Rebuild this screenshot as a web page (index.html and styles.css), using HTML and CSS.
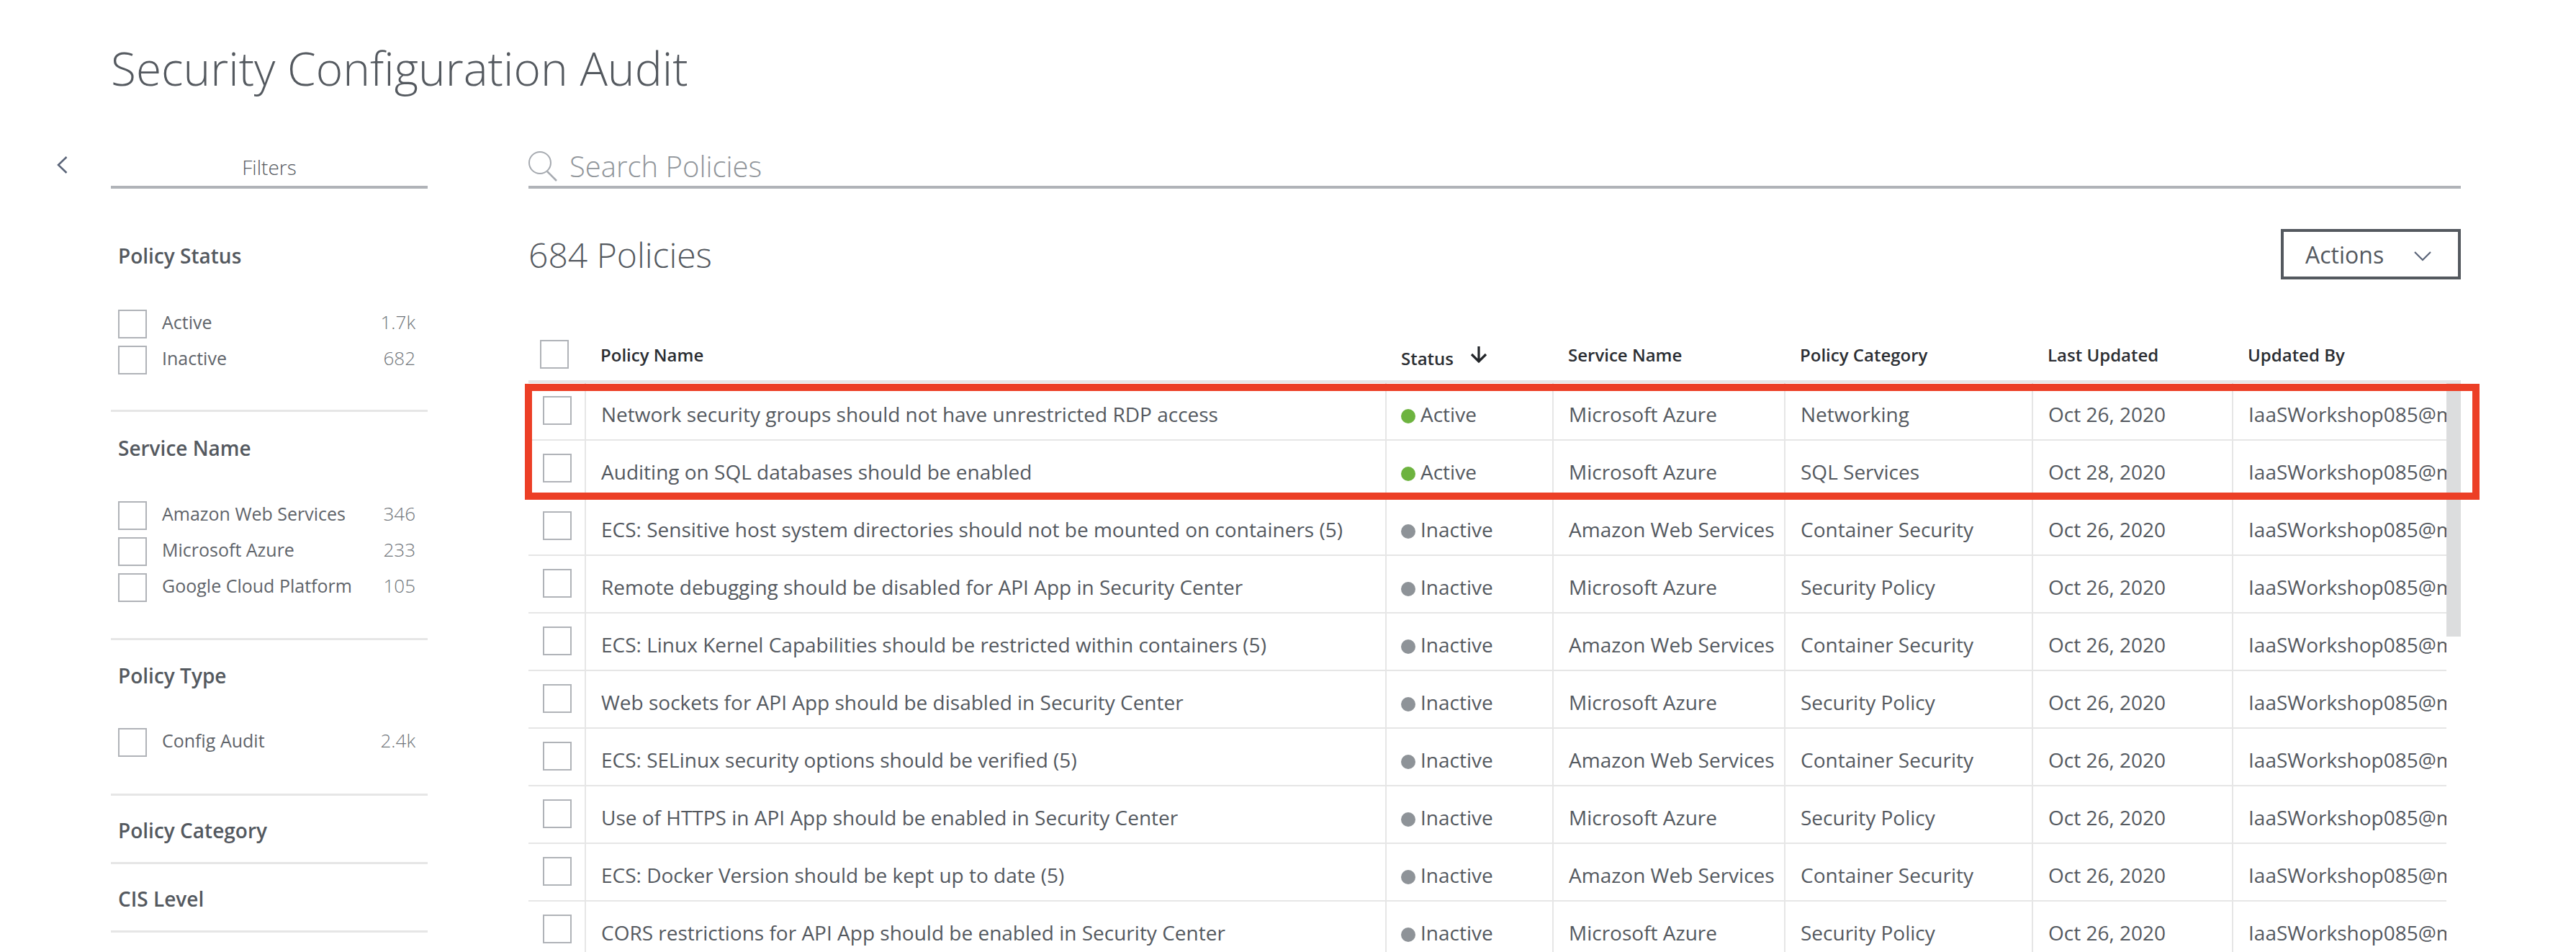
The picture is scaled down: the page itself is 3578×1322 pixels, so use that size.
FILE: index.html
```html
<!DOCTYPE html>
<html lang="en">
<head>
<meta charset="utf-8">
<title>Security Configuration Audit</title>
<link rel="stylesheet" href="styles.css">
</head>
<body>
<div class="page">
  <h1 class="title">Security Configuration Audit</h1>
  <div class="content">
    <div class="collapse">
      <svg class="collapse-icon" viewBox="0 0 15 24" width="15" height="24"><path d="M13.500 1 2 12l11.500 11" fill="none" stroke="#5a6478" stroke-width="2.500"/></svg>
    </div>
    <aside class="sidebar">
      <div class="filters-tab">Filters</div>
      <section class="group group-status">
        <h2 class="group-title">Policy Status</h2>
        <ul class="options">
          <li class="option"><span class="box"></span><span class="opt-label">Active</span><span class="opt-count">1.7k</span></li>
          <li class="option"><span class="box"></span><span class="opt-label">Inactive</span><span class="opt-count">682</span></li>
        </ul>
      </section>
      <section class="group group-service">
        <h2 class="group-title">Service Name</h2>
        <ul class="options">
          <li class="option"><span class="box"></span><span class="opt-label">Amazon Web Services</span><span class="opt-count">346</span></li>
          <li class="option"><span class="box"></span><span class="opt-label">Microsoft Azure</span><span class="opt-count">233</span></li>
          <li class="option"><span class="box"></span><span class="opt-label">Google Cloud Platform</span><span class="opt-count">105</span></li>
        </ul>
      </section>
      <section class="group group-type">
        <h2 class="group-title">Policy Type</h2>
        <ul class="options">
          <li class="option"><span class="box"></span><span class="opt-label">Config Audit</span><span class="opt-count">2.4k</span></li>
        </ul>
      </section>
      <section class="group group-closed"><h2 class="group-title">Policy Category</h2></section>
      <section class="group group-closed"><h2 class="group-title">CIS Level</h2></section>
    </aside>
    <main class="main">
      <div class="search">
        <svg class="search-icon" viewBox="0 0 42 42" width="42" height="42"><circle cx="16" cy="16" r="15" fill="none" stroke="#a6aab0" stroke-width="2"/><path d="m26 28 13 13" fill="none" stroke="#a6aab0" stroke-width="2.500"/></svg>
        <span class="search-text">Search Policies</span>
      </div>
      <div class="summary">
        <div class="count">684 Policies</div>
        <div class="actions"><span>Actions</span><svg class="actions-icon" viewBox="0 0 24 14" width="24" height="14"><path d="M1 1l11 11L23 1" fill="none" stroke="#5a6478" stroke-width="2.200"/></svg></div>
      </div>
      <div class="table">
        <div class="row head">
          <div class="cell-check"><span class="box"></span></div>
          <div class="hcell">Policy Name</div>
          <div class="hcell hcell-status">Status<svg class="sort-icon" viewBox="0 0 24 24" width="24" height="24"><path d="M12 1v21M2 12l10 10 10-10" fill="none" stroke="#23262a" stroke-width="3.200"/></svg></div>
          <div class="hcell">Service Name</div>
          <div class="hcell">Policy Category</div>
          <div class="hcell">Last Updated</div>
          <div class="hcell">Updated By</div>
        </div>
        <div class="body">
          <div class="rows">
            <div class="row"><div class="cell-check"><span class="box"></span></div><div class="cell">Network security groups should not have unrestricted RDP access</div><div class="cell cell-status"><i class="dot on"></i>Active</div><div class="cell">Microsoft Azure</div><div class="cell">Networking</div><div class="cell">Oct 26, 2020</div><div class="cell">IaaSWorkshop085@msn.com</div></div>
            <div class="row"><div class="cell-check"><span class="box"></span></div><div class="cell">Auditing on SQL databases should be enabled</div><div class="cell cell-status"><i class="dot on"></i>Active</div><div class="cell">Microsoft Azure</div><div class="cell">SQL Services</div><div class="cell">Oct 28, 2020</div><div class="cell">IaaSWorkshop085@msn.com</div></div>
            <div class="row"><div class="cell-check"><span class="box"></span></div><div class="cell">ECS: Sensitive host system directories should not be mounted on containers (5)</div><div class="cell cell-status"><i class="dot off"></i>Inactive</div><div class="cell">Amazon Web Services</div><div class="cell">Container Security</div><div class="cell">Oct 26, 2020</div><div class="cell">IaaSWorkshop085@msn.com</div></div>
            <div class="row"><div class="cell-check"><span class="box"></span></div><div class="cell">Remote debugging should be disabled for API App in Security Center</div><div class="cell cell-status"><i class="dot off"></i>Inactive</div><div class="cell">Microsoft Azure</div><div class="cell">Security Policy</div><div class="cell">Oct 26, 2020</div><div class="cell">IaaSWorkshop085@msn.com</div></div>
            <div class="row"><div class="cell-check"><span class="box"></span></div><div class="cell">ECS: Linux Kernel Capabilities should be restricted within containers (5)</div><div class="cell cell-status"><i class="dot off"></i>Inactive</div><div class="cell">Amazon Web Services</div><div class="cell">Container Security</div><div class="cell">Oct 26, 2020</div><div class="cell">IaaSWorkshop085@msn.com</div></div>
            <div class="row"><div class="cell-check"><span class="box"></span></div><div class="cell">Web sockets for API App should be disabled in Security Center</div><div class="cell cell-status"><i class="dot off"></i>Inactive</div><div class="cell">Microsoft Azure</div><div class="cell">Security Policy</div><div class="cell">Oct 26, 2020</div><div class="cell">IaaSWorkshop085@msn.com</div></div>
            <div class="row"><div class="cell-check"><span class="box"></span></div><div class="cell">ECS: SELinux security options should be verified (5)</div><div class="cell cell-status"><i class="dot off"></i>Inactive</div><div class="cell">Amazon Web Services</div><div class="cell">Container Security</div><div class="cell">Oct 26, 2020</div><div class="cell">IaaSWorkshop085@msn.com</div></div>
            <div class="row"><div class="cell-check"><span class="box"></span></div><div class="cell">Use of HTTPS in API App should be enabled in Security Center</div><div class="cell cell-status"><i class="dot off"></i>Inactive</div><div class="cell">Microsoft Azure</div><div class="cell">Security Policy</div><div class="cell">Oct 26, 2020</div><div class="cell">IaaSWorkshop085@msn.com</div></div>
            <div class="row"><div class="cell-check"><span class="box"></span></div><div class="cell">ECS: Docker Version should be kept up to date (5)</div><div class="cell cell-status"><i class="dot off"></i>Inactive</div><div class="cell">Amazon Web Services</div><div class="cell">Container Security</div><div class="cell">Oct 26, 2020</div><div class="cell">IaaSWorkshop085@msn.com</div></div>
            <div class="row"><div class="cell-check"><span class="box"></span></div><div class="cell">CORS restrictions for API App should be enabled in Security Center</div><div class="cell cell-status"><i class="dot off"></i>Inactive</div><div class="cell">Microsoft Azure</div><div class="cell">Security Policy</div><div class="cell">Oct 26, 2020</div><div class="cell">IaaSWorkshop085@msn.com</div></div>
          </div>
          <div class="scrollbar"><div class="thumb"></div></div>
          <div class="highlight"></div>
        </div>
      </div>
    </main>
  </div>
</div>
</body>
</html>
```
FILE: styles.css
```css
* { box-sizing: border-box; }
html, body { margin: 0; padding: 0; background: #fff; }
body { font-family: "Open Sans", "Liberation Sans", sans-serif; color: #54595f; overflow: hidden; height: 1322px; }
.page { height: 1322px; overflow: hidden; }
.title { margin: 0; padding-left: 154px; height: 200px; padding-top: 50px; font-size: 64px; line-height: 90px; font-weight: 300; color: #54595f; }
.content { display: flex; align-items: flex-start; }
.collapse { width: 154px; padding: 17px 0 0 79px; }
.collapse-icon { display: block; }
.sidebar { width: 440px; margin-right: 140px; flex: none; }
.filters-tab { height: 62px; border-bottom: 4px solid #b0b3b8; text-align: center; font-size: 28px; line-height: 64px; font-weight: 300; color: #54595f; }
.group { border-bottom: 3px solid #e6e6e6; padding: 0 17px 0 10px; }
.group-title { margin: 0; font-size: 28px; font-weight: 600; line-height: 40px; color: #54595f; }
.group-status { height: 310px; padding-top: 73px; }
.group-service { height: 317px; padding-top: 30px; }
.group-type { height: 216px; padding-top: 29px; }
.group-closed { height: 95px; padding-top: 28px; }
.options { list-style: none; margin: 55px 0 0; padding: 0; }
.group-service .options { margin-top: 54px; }
.group-type .options { margin-top: 53px; }
.option { display: flex; height: 50px; }
.box { display: block; flex: none; width: 40px; height: 40px; border: 2px solid #b0b3b8; background: #fff; }
.opt-label { margin-left: 21px; font-size: 25px; line-height: 34px; font-weight: 400; color: #5f646a; flex: 1; white-space: nowrap; }
.opt-count { font-size: 26px; line-height: 34px; font-weight: 300; color: #70757a; }
.main { width: 2684px; flex: none; }
.search { height: 62px; border-bottom: 4px solid #b0b3b8; display: flex; align-items: flex-start; }
.search-icon { display: block; margin-top: 10px; flex: none; }
.search-text { margin-left: 15px; font-size: 40px; line-height: 62px; font-weight: 300; color: #90959a; }
.summary { height: 210px; padding-top: 56px; display: flex; justify-content: space-between; align-items: flex-start; }
.count { font-size: 48px; line-height: 72px; font-weight: 300; color: #54595f; }
.actions { width: 250px; height: 70px; border: 4px solid #54595f; display: flex; align-items: center; padding-left: 30px; font-size: 32px; font-weight: 500; color: #54595f; }
.actions-icon { margin-left: 42px; margin-top: 6px; }
.row { display: grid; grid-template-columns: 78px 1112px 232px 322px 344px 278px 298px; height: 80px; border-bottom: 2px solid #e6e6e6; }
.row.head { height: 60px; border-bottom: 4px solid #e6e6e6; width: 2684px; grid-template-columns: 78px 1112px 232px 322px 344px 278px 318px; }
.head .cell-check { padding: 0 0 0 16px; }
.cell-check { padding: 18px 0 0 20px; }
.hcell { padding-left: 22px; padding-top: 2px; font-size: 24px; line-height: 38px; font-weight: 600; color: #2b2e33; white-space: nowrap; }
.hcell-status { display: flex; align-items: flex-start; padding-top: 7px; }
.sort-icon { margin-left: 23px; margin-top: 1px; flex: none; }
.cell { padding: 23px 0 0 21px; border-left: 2px solid #e6e6e6; font-size: 28px; line-height: 40px; color: #54595f; white-space: nowrap; overflow: hidden; }
.cell-status { padding-left: 20px; }
.dot { display: inline-block; width: 20px; height: 20px; border-radius: 50%; margin-right: 7px; vertical-align: -2px; }
.dot.on { background: #6db33f; }
.dot.off { background: #8e9398; }
.body { display: flex; position: relative; }
.rows { width: 2664px; flex: none; }
.scrollbar { width: 20px; flex: none; }
.thumb { height: 352px; background: #dcddde; }
.highlight { position: absolute; left: -5px; top: 1px; width: 2715px; height: 161px; border: 10px solid #ec3f26; }
```
